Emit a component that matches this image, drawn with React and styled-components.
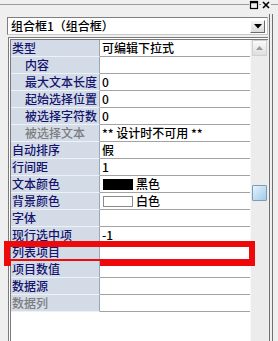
import React from "react";
import styled, { createGlobalStyle } from "styled-components";

const Global = createGlobalStyle`
  html, body { margin: 0; padding: 0; background: #efefef; }
  body { font-family: "Noto Sans CJK SC", "Noto Sans", sans-serif; }
`;

const Page = styled.div`
  width: 278px;
  height: 341px;
  overflow: hidden;
  display: flex;
  flex-direction: column;
  background: #efefef;
`;

const TopBar = styled.div`
  height: 4px;
  flex: none;
  display: flex;
  justify-content: flex-end;
  align-items: flex-end;
  gap: 2px;
  padding-right: 7px;
  border-bottom: 1px solid #9a9a9a;
`;

const WinBtn = styled.svg`
  width: 10px;
  height: 10px;
  margin-bottom: -6px;
  background: #efefef;
`;

const Body = styled.div`
  flex: 1;
  display: flex;
  min-height: 0;
`;

const Panel = styled.div`
  width: 261px;
  padding-left: 7px;
  padding-top: 12px;
  display: flex;
  flex-direction: column;
  min-height: 0;
`;

const Frame = styled.div`
  flex: 1;
  display: flex;
  padding-left: 1px;
  gap: 2px;
  margin-top: 9px;
`;

const FrameLine = styled.div`
  width: 1px;
  background: #6f6f6f;
`;

const Combo = styled.div`
  height: 18px;
  box-sizing: border-box;
  background: #fff;
  border: 1px solid #7f7f7f;
  border-right-color: #c8c8c8;
  border-bottom-color: #c8c8c8;
  display: flex;
  align-items: center;
  padding: 0 2px 0 3px;
  font-size: 12px;
  color: #000;
`;

const ComboText = styled.span`
  flex: 1;
  line-height: 16px;
  white-space: nowrap;
  font-weight: 500;
`;

const DropBtn = styled.div`
  width: 15px;
  height: 13px;
  box-sizing: border-box;
  background: linear-gradient(#f6f6f6, #dcdcdc);
  border: 1px solid #fff;
  border-right-color: #6a6a6a;
  border-bottom-color: #6a6a6a;
  display: flex;
  align-items: center;
  justify-content: center;
`;

const Grid = styled.div`
  margin-top: 2px;
  margin-left: 1px;
  flex: 1;
  display: flex;
  min-height: 0;
  border-top: 3px double #7a7a7a;
  border-left: 3px double #7a7a7a;
  background: #fff;
`;

const Table = styled.div`
  flex: 1;
  display: flex;
  flex-direction: column;
`;

const Row = styled.div`
  position: relative;
  display: grid;
  grid-template-columns: 89px 1fr;
  height: 17px;
  font-size: 12px;
  line-height: 16px;
  font-weight: 500;
`;

const Label = styled.div`
  background: #d3dbe7;
  border-right: 1px solid #9ea6b2;
  border-bottom: 1px solid #eef1f6;
  padding-left: ${(p) => (p.$indent ? 14 : 1)}px;
  color: ${(p) => (p.$disabled ? "#7d7d7d" : "#14146e")};
  white-space: nowrap;
  overflow: hidden;
`;

const Value = styled.div`
  border-bottom: 1px solid #a3a3a3;
  padding-left: 2px;
  color: #000;
  display: flex;
  align-items: center;
  gap: 3px;
  white-space: nowrap;
  overflow: hidden;
`;

const Swatch = styled.span`
  width: 30px;
  height: 11px;
  margin-left: 1px;
  box-sizing: border-box;
  background: ${(p) => p.$color};
  border: 1px solid ${(p) => (p.$color === "#000" ? "#000" : "#8a8a8a")};
`;

const Highlight = styled.div`
  position: absolute;
  left: -7px;
  top: -3px;
  width: 251px;
  height: 25px;
  box-sizing: border-box;
  border: 6px solid #ee0a0a;
  border-bottom-width: 7px;
  pointer-events: none;
`;

const Scroll = styled.div`
  width: 17px;
  background: #ececec;
  border-left: 1px solid #f8f8f8;
  display: flex;
  flex-direction: column;
  align-items: center;
`;

const UpBtn = styled.div`
  width: 15px;
  height: 16px;
  box-sizing: border-box;
  background: linear-gradient(#fafafa, #dedede);
  border: 1px solid #d0d0d0;
  display: flex;
  align-items: center;
  justify-content: center;
`;

const Thumb = styled.div`
  width: 15px;
  height: 16px;
  box-sizing: border-box;
  border: 1px solid #7d9cb4;
  border-radius: 1px;
  background: linear-gradient(135deg, #e6f3fb, #9fcbea);
`;

const rows = [
  { label: "类型", value: "可编辑下拉式" },
  { label: "内容", indent: true, value: "" },
  { label: "最大文本长度", indent: true, value: "0" },
  { label: "起始选择位置", indent: true, value: "0" },
  { label: "被选择字符数", indent: true, value: "0" },
  { label: "被选择文本", indent: true, disabled: true, value: "** 设计时不可用 **" },
  { label: "自动排序", value: "假" },
  { label: "行间距", value: "1" },
  { label: "文本颜色", value: "黑色", swatch: "#000" },
  { label: "背景颜色", value: "白色", swatch: "#fff" },
  { label: "字体", value: "" },
  { label: "现行选中项", value: "-1" },
  { label: "列表项目", value: "", highlight: true },
  { label: "项目数值", value: "" },
  { label: "数据源", value: "" },
  { label: "数据列", disabled: true, value: "" },
];

export default function App() {
  return (
    <Page>
      <Global />
      <TopBar>
        <WinBtn viewBox="0 0 10 10">
          <rect x="1.5" y="1.5" width="7" height="7" fill="none" stroke="#000" strokeWidth="1.2" />
          <line x1="1.5" y1="2.5" x2="8.5" y2="2.5" stroke="#000" strokeWidth="1.5" />
        </WinBtn>
        <WinBtn viewBox="0 0 10 10">
          <path d="M2 2 L8 8 M8 2 L2 8" stroke="#000" strokeWidth="1.6" />
        </WinBtn>
      </TopBar>
      <Body>
        <Panel>
          <Combo>
            <ComboText>组合框1（组合框）</ComboText>
            <DropBtn>
              <svg width="8" height="5" viewBox="0 0 8 5">
                <path d="M0 0 H8 L4 4.5 Z" fill="#000" />
              </svg>
            </DropBtn>
          </Combo>
          <Grid>
            <Table>
              {rows.map((r) => (
                <Row key={r.label}>
                  <Label $indent={r.indent} $disabled={r.disabled}>
                    {r.label}
                  </Label>
                  <Value>
                    {r.swatch && <Swatch $color={r.swatch} />}
                    {r.value}
                  </Value>
                  {r.highlight && <Highlight />}
                </Row>
              ))}
            </Table>
            <Scroll>
              <UpBtn>
                <svg width="7" height="4" viewBox="0 0 7 4">
                  <path d="M0 4 L3.5 0 L7 4 Z" fill="#9a9a9a" />
                </svg>
              </UpBtn>
              <Thumb style={{ marginTop: 129 }} />
            </Scroll>
          </Grid>
        </Panel>
        <Frame>
          <FrameLine />
          <FrameLine />
        </Frame>
      </Body>
    </Page>
  );
}
